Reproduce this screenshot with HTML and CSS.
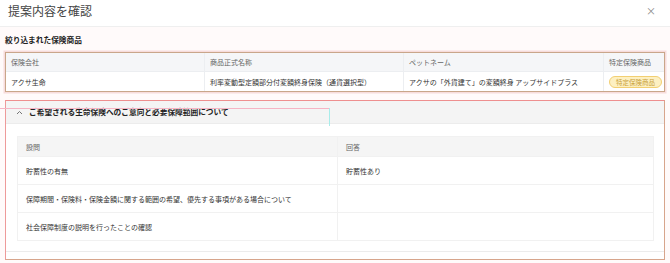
FILE: index.html
```html
<!DOCTYPE html>
<html lang="ja">
<head>
    <meta charset="UTF-8">
    <meta name="viewport" content="width=device-width, initial-scale=1.0">
    <title>提案内容を確認</title>
    <link rel="stylesheet" href="styles.css">
</head>
<body>
    <div class="modal">
        <div class="modal-header">
            <h1>提案内容を確認</h1>
            <span class="close">×</span>
        </div>

        <div class="modal-body">
            <h2 class="section-title">絞り込まれた保険商品</h2>

            <div class="product-box">
                <div class="product-row product-head">
                    <div class="cell">保険会社</div>
                    <div class="cell">商品正式名称</div>
                    <div class="cell">ペットネーム</div>
                    <div class="cell">特定保険商品</div>
                </div>
                <div class="product-row">
                    <div class="cell">アクサ生命</div>
                    <div class="cell">利率変動型定額部分付変額終身保険（通貨選択型）</div>
                    <div class="cell">アクサの「外貨建て」の変額終身 アップサイドプラス</div>
                    <div class="cell"><span class="badge">特定保険商品</span></div>
                </div>
            </div>

            <div class="accordion">
                <div class="accordion-header">
                    <svg class="chevron" width="7" height="5" viewBox="0 0 7 5">
                        <path d="M1 4 L3.5 1.5 L6 4" fill="none" stroke="#666" stroke-width="0.9"/>
                    </svg>
                    <span class="accordion-title">ご希望される生命保険へのご意向と必要保障範囲について</span>
                </div>
                <div class="accordion-body">
                    <div class="qa-table">
                        <div class="qa-row qa-head">
                            <div class="qa-cell">設問</div>
                            <div class="qa-cell">回答</div>
                        </div>
                        <div class="qa-row">
                            <div class="qa-cell">貯蓄性の有無</div>
                            <div class="qa-cell">貯蓄性あり</div>
                        </div>
                        <div class="qa-row">
                            <div class="qa-cell">保障期間・保険料・保険金額に関する範囲の希望、優先する事項がある場合について</div>
                            <div class="qa-cell"></div>
                        </div>
                        <div class="qa-row">
                            <div class="qa-cell">社会保障制度の説明を行ったことの確認</div>
                            <div class="qa-cell"></div>
                        </div>
                    </div>
                </div>
                <div class="guide-h"></div>
                <div class="guide-v"></div>
            </div>
        </div>
    </div>
</body>
</html>
```

FILE: styles.css
```css
* {
    box-sizing: border-box;
}

body {
    font-family: "Noto Sans CJK JP", "Noto Sans", sans-serif;
    margin: 0;
    background: #ffffff;
    color: #333;
}

.modal {
    width: 670px;
    height: 263px;
    overflow: hidden;
}

.modal-header {
    display: flex;
    align-items: center;
    justify-content: space-between;
    height: 27px;
    padding: 0 14px 0 8px;
    border-bottom: 1px solid #efefef;
}

h1 {
    margin: 0;
    font-size: 12px;
    font-weight: 400;
    color: #444;
    line-height: 1;
    margin-top: -5px;
}

.close {
    font-size: 10px;
    color: #888;
    margin-top: -5px;
}

.modal-body {
    background: #fffafa;
    padding: 7px 5px 0 5px;
    height: 236px;
}

.section-title {
    margin: 0 0 6px 0;
    font-size: 7.7px;
    font-weight: 700;
    color: #222;
    line-height: 12px;
}

.product-box {
    border: 1px solid #c9a68a;
    box-shadow: 0 0 0 1.5px #f7dcdc;
    background: white;
}

.product-row {
    display: grid;
    grid-template-columns: 198px 199px 200px 1fr;
    height: 19px;
}

.product-head {
    background: #f5f6f8;
    border-bottom: 1px solid #eceef1;
    color: #666;
}

.cell {
    display: flex;
    align-items: center;
    padding-left: 5px;
    font-size: 7px;
    white-space: nowrap;
    border-left: 1px solid #eceef1;
}

.cell:first-child {
    border-left: none;
}

.badge {
    display: inline-block;
    background: #fdf0c2;
    border: 1px solid #f2cf72;
    color: #c9a23c;
    font-size: 6.5px;
    line-height: 10px;
    padding: 0 6px;
    border-radius: 7px;
}

.accordion {
    position: relative;
    margin-top: 8px;
    border: 1px solid #d7a58c;
    border-top-color: #ee8f8f;
    border-left-color: #ee9a9a;
    background: white;
    height: 160px;
}

.accordion-header {
    display: flex;
    align-items: center;
    gap: 6px;
    height: 23px;
    padding-left: 10px;
    background: #f4f4f4;
    border-bottom: 1px solid #ececec;
}

.accordion-title {
    font-size: 7.7px;
    font-weight: 700;
    color: #222;
    margin-top: -1px;
}

.accordion-body {
    padding: 12px 10px 0 11px;
    height: 128px;
    border-bottom: 1px solid #ececec;
}

.qa-table {
    border: 1px solid #f1f1f1;
}

.qa-row {
    display: grid;
    grid-template-columns: 319px 1fr;
    height: 28px;
    border-top: 1px solid #f1f1f1;
}

.qa-row:first-child {
    border-top: none;
}

.qa-head {
    height: 19px;
    background: #f5f5f5;
    color: #666;
}

.qa-cell {
    display: flex;
    align-items: center;
    padding-left: 8px;
    font-size: 7px;
    white-space: nowrap;
    border-left: 1px solid #f1f1f1;
}

.qa-cell:first-child {
    border-left: none;
}

/* debug guides drawn over the header */
.guide-h {
    position: absolute;
    left: -6px;
    top: 7px;
    width: 330px;
    height: 1px;
    background: #f6b4c4;
}

.guide-v {
    position: absolute;
    left: 323px;
    top: 7px;
    width: 1px;
    height: 18px;
    background: #a8ecea;
}
```
